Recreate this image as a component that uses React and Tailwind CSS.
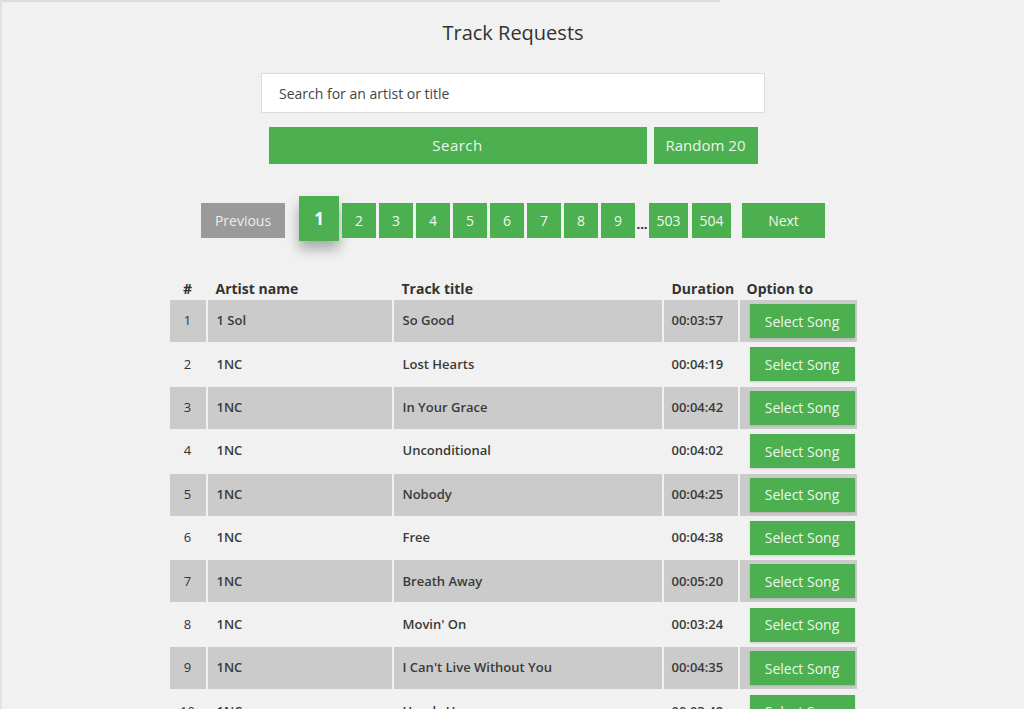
import React, { useState } from 'react';

const tracks = [
  { artist: '1 Sol', title: 'So Good', duration: '00:03:57' },
  { artist: '1NC', title: 'Lost Hearts', duration: '00:04:19' },
  { artist: '1NC', title: 'In Your Grace', duration: '00:04:42' },
  { artist: '1NC', title: 'Unconditional', duration: '00:04:02' },
  { artist: '1NC', title: 'Nobody', duration: '00:04:25' },
  { artist: '1NC', title: 'Free', duration: '00:04:38' },
  { artist: '1NC', title: 'Breath Away', duration: '00:05:20' },
  { artist: '1NC', title: "Movin' On", duration: '00:03:24' },
  { artist: '1NC', title: "I Can't Live Without You", duration: '00:04:35' },
  { artist: '1NC', title: 'Hands Up', duration: '00:03:48' },
  { artist: '1NC', title: 'Forever', duration: '00:04:11' },
  { artist: '1NC', title: 'Shine', duration: '00:03:59' },
];

const pages = ['2', '3', '4', '5', '6', '7', '8', '9'];

const TrackRequests = () => {
  const [query, setQuery] = useState('');

  return (
    <div className="min-h-screen bg-[#f1f1f1] border-l-2 border-[#e2e2e2] text-[#333]" style={{ fontFamily: '"Open Sans", "Liberation Sans", sans-serif' }}>
      <div className="h-[2px] w-[718px] bg-[#dcdcdc]" />

      <div className="flex flex-col items-center">
        <h1 className="mt-[18px] text-[20px] leading-[26px] text-[#333]">Track Requests</h1>

        {/* Suche */}
        <input
          type="text"
          value={query}
          onChange={(e) => setQuery(e.target.value)}
          placeholder="Search for an artist or title"
          className="mt-[27px] h-[40px] w-[504px] border border-[#dcdcdc] bg-white px-[17px] text-[14px] text-[#333] placeholder:text-[#444] outline-none"
        />
        <div className="mt-[14px] flex gap-[7px]">
          <button className="h-[37px] w-[378px] bg-[#4caf50] text-[15px] tracking-[0.5px] text-[#eaf6ea]">Search</button>
          <button className="h-[37px] w-[104px] bg-[#4caf50] text-[15px] text-[#eaf6ea]">Random 20</button>
        </div>

        {/* Seiten */}
        <div className="mt-[32px] flex items-start">
          <button className="mt-[7px] h-[35px] w-[84px] bg-[#9a9a9a] text-[14px] text-[#ececec]">Previous</button>
          <button className="ml-[14px] h-[45px] w-[40px] bg-[#4caf50] text-[17px] font-bold text-white shadow-[0_8px_12px_rgba(0,0,0,0.3)]">1</button>
          <div className="mt-[7px] ml-[3px] flex gap-[3px]">
            {pages.map((p) => (
              <button key={p} className="h-[35px] w-[34px] bg-[#4caf50] text-[14px] text-[#f0f8f0]">{p}</button>
            ))}
          </div>
          <span className="mt-[7px] flex h-[35px] w-[14px] items-center justify-center pt-[7px] text-[13px] font-bold leading-none text-[#222]">...</span>
          <div className="mt-[7px] flex gap-[4px]">
            <button className="h-[35px] w-[39px] bg-[#4caf50] text-[14px] text-[#f0f8f0]">503</button>
            <button className="h-[35px] w-[39px] bg-[#4caf50] text-[14px] text-[#f0f8f0]">504</button>
          </div>
          <button className="mt-[7px] ml-[11px] h-[35px] w-[83px] bg-[#4caf50] text-[14px] text-[#f0f8f0]">Next</button>
        </div>

        {/* Tabelle */}
        <div className="mt-[37px] w-[687px]">
          <div className="flex h-[20px] items-center gap-[2px] text-[14px] font-bold">
            <div className="w-[36px] text-center">#</div>
            <div className="w-[184px] pl-[8px]">Artist name</div>
            <div className="w-[268px] pl-[8px]">Track title</div>
            <div className="w-[74px] pl-[8px]">Duration</div>
            <div className="w-[117px] pl-[7px]">Option to</div>
          </div>
          <div className="mt-[2px] flex flex-col gap-[1.4px]">
            {tracks.map((t, i) => {
              const bg = i % 2 === 0 ? 'bg-[#cbcbcb]' : '';
              return (
                <div key={i} className="flex h-[42px] gap-[2px] text-[13px] font-semibold text-[#3a3a3a]">
                  <div className={`flex w-[36px] items-center justify-center font-normal text-[#333] ${bg}`}>{i + 1}</div>
                  <div className={`flex w-[184px] items-center pl-[9px] ${bg}`}>{t.artist}</div>
                  <div className={`flex w-[268px] items-center pl-[9px] ${bg}`}>{t.title}</div>
                  <div className={`flex w-[74px] items-center pl-[8px] ${bg}`}>{t.duration}</div>
                  <div className={`flex w-[117px] items-center pl-[10px] ${bg}`}>
                    <button className="h-[34px] w-[105px] bg-[#4caf50] text-[14px] font-normal text-[#eef8ee] shadow-[0_1px_2px_rgba(0,0,0,0.15)]">Select Song</button>
                  </div>
                </div>
              );
            })}
          </div>
        </div>
      </div>
    </div>
  );
};

export default function App() {
  return <TrackRequests />;
}
